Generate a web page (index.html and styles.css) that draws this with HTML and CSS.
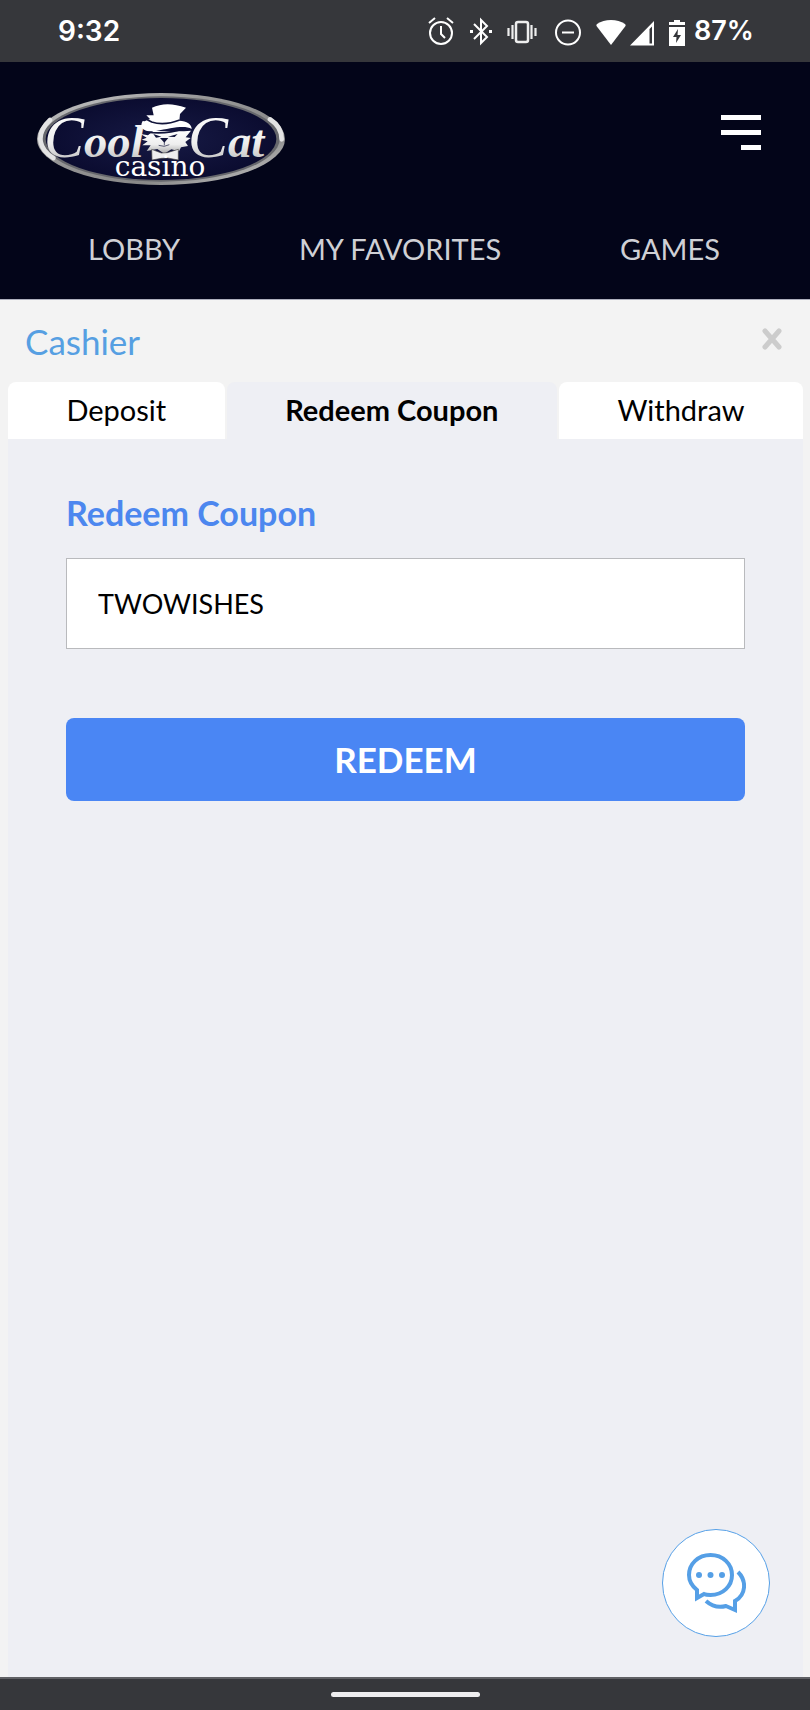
FILE: index.html
```html
<!DOCTYPE html>
<html lang="en">
<head>
<meta charset="utf-8">
<meta name="viewport" content="width=device-width, initial-scale=1">
<title>Cool Cat Casino – Cashier</title>
<link rel="stylesheet" href="styles.css">
</head>
<body>
<div class="status-bar">
  <span class="status-time">9:32</span>
  <div class="status-right">
    <div class="status-icons">
      <svg width="28" height="30" viewBox="0 0 28 30" fill="none" stroke="#fff" stroke-width="2"><circle cx="14" cy="17" r="11"/><path d="M14 10v8l4 4M2 7l6-5M26 7l-6-5"/></svg>
      <svg width="24" height="30" viewBox="0 0 24 30" fill="none" stroke="#fff" stroke-width="2"><path d="M5 8l13 13-6 6V4l6 6L5 23"/><path d="M1 15.500h3M20 15.500h3" stroke-width="3"/></svg>
      <svg width="30" height="30" viewBox="0 0 30 30" fill="none" stroke="#eee"><rect x="9" y="6" width="12" height="20" rx="2" stroke-width="2.500"/><path d="M1.500 12v8M28.500 12v8M5.500 9v14M24.500 9v14" stroke-width="2.200"/></svg>
      <svg width="30" height="30" viewBox="0 0 30 30" fill="none" stroke="#fff" stroke-width="2"><circle cx="17" cy="16.500" r="12"/><path d="M11 16.500h12"/></svg>
      <svg width="32" height="30" viewBox="0 0 32 30" fill="#fff"><path d="M16 29 1.500 10Q1 9 2 8Q8 4 16 4T30 8Q31 9 30.500 10Z"/></svg>
    </div>
    <svg class="status-signal" width="26" height="30" viewBox="0 0 26 30" fill="#fff"><path fill-rule="evenodd" d="M0 29.500 24 5v24.500zM19.500 13v14.500h2.500V10.500z"/></svg>
    <svg class="status-battery" width="18" height="30" viewBox="0 0 18 30"><path fill="#fff" d="M6 4h6v2h5v3H1V6h5zM1 11h16v19H1z"/><path fill="#333539" d="M10 13 5 21h3.500L8 27l5-8H9.500z"/></svg>
    <span class="status-level">87%</span>
  </div>
</div>

<header class="site-header">
  <div class="brand-row">
    <a class="brand" href="#" aria-label="Cool Cat Casino">
      <svg class="brand-logo" viewBox="0 0 795 330">
        <defs>
          <linearGradient id="silver" x1="0" y1="0" x2="0" y2="1"><stop offset="0" stop-color="#fff"/><stop offset=".6" stop-color="#eee"/><stop offset="1" stop-color="#aaa"/></linearGradient>
          <linearGradient id="ring" x1="0" y1="0" x2="1" y2="1"><stop offset="0" stop-color="#ccc"/><stop offset=".35" stop-color="#999"/><stop offset=".7" stop-color="#888"/><stop offset="1" stop-color="#ccc"/></linearGradient>
          <radialGradient id="navy"><stop offset="0" stop-color="#171a45"/><stop offset="1" stop-color="#0b0c30"/></radialGradient>
        </defs>
        <ellipse cx="393" cy="162" rx="372" ry="138" fill="url(#ring)"/>
        <ellipse cx="393" cy="162" rx="356" ry="128" fill="#66676c"/>
        <ellipse cx="393" cy="162" rx="346" ry="123" fill="url(#navy)"/>
        <path fill="none" stroke="#e4e4e4" stroke-width="14" stroke-linecap="round" d="M60 105C12 150 30 195 70 219M755 163Q755 125 720 103"/>
        <g class="brand-script" fill="url(#silver)">
          <text x="42" y="216"><tspan class="brand-cap">C</tspan>ool</text>
          <text x="474" y="216"><tspan class="brand-cap">C</tspan>at</text>
        </g>
        <path fill="url(#silver)" d="M332 147 354 151 370 138 462 139 483 137 467 157 482 159 466 171 474 183 453 187 447 199 424 193 403 206 382 192 350 198 362 181 337 181 353 169 335 164 350 158Z"/>
        <path fill="#fff" d="M338 108C325 131 346 143 378 138C423 130 463 119 485 132C486 119 470 107 448 107L450 87 468 68Q409 47 366 68L371 91 349 91 360 102 344 109Z"/>
        <path fill="none" stroke="#11143a" stroke-width="5" d="M352 104 365 111Q403 123 449 105M348 141Q407 149 459 132"/>
        <path fill="#11143a" d="M370 147 394 155 378 158ZM414 155 443 147 434 156ZM390 159h25l-12 14z"/>
        <path fill="none" stroke="#11143a" stroke-width="2" d="M403 171v10M386 181q17 7 32-2"/>
        <path fill="#eee" stroke="#444" stroke-width="2" d="M365 193 394 204 412 203 445 193 445 225 413 219 394 220 366 225Z"/>
        <text class="brand-sub" x="390" y="272" text-anchor="middle" fill="#fff">casino</text>
      </svg>
    </a>
    <button class="menu-button" type="button" aria-label="Menu">
      <span class="menu-line"></span><span class="menu-line"></span><span class="menu-line menu-line-short"></span>
    </button>
  </div>
  <nav class="main-nav">
    <a href="#">LOBBY</a><a href="#">MY FAVORITES</a><a href="#">GAMES</a>
  </nav>
</header>

<main class="cashier">
  <div class="cashier-head">
    <h1 class="cashier-title">Cashier</h1>
    <button class="close-button" type="button" aria-label="Close">
      <svg width="20" height="22" viewBox="0 0 20 22" fill="none" stroke="#ccc" stroke-width="5" stroke-linecap="round"><path d="M3 3l14 16M17 3 3 19"/></svg>
    </button>
  </div>
  <div class="tabs" role="tablist">
    <button class="tab" type="button" role="tab" aria-selected="false">Deposit</button>
    <button class="tab tab-active" type="button" role="tab" aria-selected="true">Redeem Coupon</button>
    <button class="tab" type="button" role="tab" aria-selected="false">Withdraw</button>
  </div>
  <form class="panel">
    <label class="panel-title" for="coupon">Redeem Coupon</label>
    <input class="coupon-input" id="coupon" type="text" value="TWOWISHES">
    <button class="redeem-button" type="button">REDEEM</button>
  </form>
</main>

<div class="gesture-bar"><span class="gesture-handle"></span></div>

<button class="chat-button" type="button" aria-label="Chat">
  <svg width="60" height="62" viewBox="0 0 60 62" fill="none" stroke="#559fe6" stroke-width="4"><path d="M11 38C6 34 3 29 3 23C3 12 12 3 24.500 3S46 12 46 23S37 43 24.500 43Q20 43 18 42L11 46Z"/><path d="M52 20C61 29 60 43 49 49V58L40 54Q29 57 20 49"/><g fill="#559fe6" stroke="none"><circle cx="13" cy="23" r="3"/><circle cx="24.500" cy="23" r="3"/><circle cx="36" cy="23" r="3"/></g></svg>
</button>
</body>
</html>
```

FILE: styles.css
```css
* { box-sizing: border-box; }

body {
  margin: 0;
  min-height: 100vh;
  display: flex;
  flex-direction: column;
  background: #f3f3f3;
  font-family: Lato, "Liberation Sans", sans-serif;
  color: #000;
}

button {
  border: 0;
  padding: 0;
  background: none;
  font: inherit;
  color: inherit;
  cursor: pointer;
}

svg { display: block; }

.status-bar {
  display: flex;
  align-items: center;
  justify-content: space-between;
  height: 62px;
  padding: 0 56px 0 58px;
  background: #36373b;
  color: #fff;
  font: 600 28px/32px Inter, Roboto, sans-serif;
}

.status-right, .status-icons { display: flex; align-items: center; }
.status-icons { gap: 14px; }
.status-signal { margin-left: 3px; }
.status-battery { margin: 0 8px 0 12px; }
.status-level { font-size: 27px; }

.site-header {
  background: #030519;
  border-bottom: 1px solid #aeb0bd;
}

.brand-row {
  display: flex;
  align-items: flex-start;
  justify-content: space-between;
  padding: 23px 49px 0 30px;
}

.brand-logo { width: 265px; height: 110px; }
.brand-script { font: italic 700 140px "Liberation Serif", serif; }
.brand-cap { font-size: 180px; font-weight: 400; }
.brand-sub { font: 400 84px "DejaVu Serif", serif; }

.menu-button {
  display: flex;
  flex-direction: column;
  align-items: flex-end;
  gap: 10px;
  margin-top: 30px;
}

.menu-line { width: 40px; height: 5px; background: #fff; }
.menu-line-short { width: 20px; }

.main-nav {
  display: flex;
  justify-content: space-between;
  padding: 36px 90px 32px 88px;
  font-size: 29px;
  line-height: 36px;
}

.main-nav a { color: #cfd0d5; text-decoration: none; }

.cashier {
  flex: 1;
  display: flex;
  flex-direction: column;
  padding: 0 7px 0 8px;
}

.cashier-head {
  display: flex;
  align-items: center;
  justify-content: space-between;
  height: 82px;
  padding: 0 21px 0 17px;
}

.close-button { padding-bottom: 4px; }

.cashier-title {
  margin: 0;
  font-size: 35px;
  font-weight: 400;
  line-height: 40px;
  color: #569fe2;
}

.tabs { display: flex; gap: 2px; }

.tab {
  flex: 1 1 auto;
  height: 57px;
  padding: 0 56px 2px;
  border-radius: 8px 8px 0 0;
  background: #fff;
  font-size: 29px;
}

.tab-active { background: #eeeff4; font-weight: 700; }

.panel {
  flex: 1;
  display: flex;
  flex-direction: column;
  padding: 54px 58px;
  background: #eeeff4;
}

.panel-title {
  font-size: 34px;
  font-weight: 700;
  line-height: 40px;
  color: #4c87ef;
}

.coupon-input {
  height: 91px;
  margin-top: 25px;
  padding: 0 31px;
  border: 1px solid #b9babd;
  border-radius: 0;
  background: #fff;
  font: 27px Lato, "Liberation Sans", sans-serif;
  color: #000;
}

.redeem-button {
  height: 83px;
  margin-top: 69px;
  padding-bottom: 2px;
  border-radius: 8px;
  background: #4a86f4;
  color: #fff;
  font-size: 35px;
  font-weight: 700;
}

.gesture-bar {
  display: flex;
  align-items: center;
  justify-content: center;
  height: 33px;
  border-top: 2px solid #606165;
  background: #36373b;
}

.gesture-handle { width: 149px; height: 5px; border-radius: 3px; background: #efeef0; }

.chat-button {
  position: fixed;
  right: 40px;
  bottom: 73px;
  display: flex;
  align-items: center;
  justify-content: center;
  width: 108px;
  height: 108px;
  border: 1px solid #559fe6;
  border-radius: 50%;
  background: #fff;
}
```
